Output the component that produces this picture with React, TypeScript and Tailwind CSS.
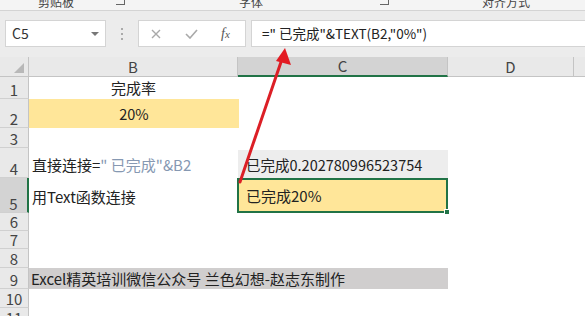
import React from "react";

const font = { fontFamily: '"Noto Sans CJK SC", "Noto Sans", sans-serif' };

function RowHead({ n, h, active }: { n: number; h: string; active?: boolean }) {
  return (
    <div
      className={`${h} w-[29px] shrink-0 flex items-end justify-center text-[15px] leading-[16px] text-[#444] border-b border-[#d0d0d0] ${
        active ? "bg-[#d3d3d3] border-r-2 border-r-[#217346]" : "bg-[#e9e9e9] border-r border-r-[#c4c4c4]"
      }`}
    >
      {n}
    </div>
  );
}

export default function App() {
  return (
    <div className="relative w-[585px] h-[316px] overflow-hidden bg-white" style={font}>
      {/* ribbon remnant */}
      <div className="h-[11px] bg-[#f4f4f4] border-b border-[#d4d4d4] flex items-start overflow-hidden text-[12px] leading-[12px] text-[#444]">
        <span className="ml-[38px] -mt-[4px]">剪贴板</span>
        <span className="ml-[42px] -mt-[2px] w-[9px] h-[7px] border-r border-b border-[#666]" />
        <span className="ml-[114px] -mt-[4px]">字体</span>
        <span className="ml-[117px] -mt-[2px] w-[9px] h-[7px] border-r border-b border-[#666]" />
        <span className="ml-[93px] -mt-[4px]">对齐方式</span>
      </div>

      {/* formula bar */}
      <div className="h-[46px] bg-[#ececec] flex items-start pt-[9px]">
        <div className="ml-[5px] w-[101px] h-[27px] bg-white border border-[#d4d4d4] flex items-center justify-between pl-[6px] pr-[6px]">
          <span className="text-[14px] text-[#333]">C5</span>
          <span className="w-0 h-0 border-l-[4px] border-r-[4px] border-t-[4px] border-l-transparent border-r-transparent border-t-[#777]" />
        </div>
        <div className="ml-[14px] w-[3px] h-[27px] flex flex-col items-center justify-center gap-[3px]">
          <span className="w-[2px] h-[2px] bg-[#aaa]" />
          <span className="w-[2px] h-[2px] bg-[#aaa]" />
          <span className="w-[2px] h-[2px] bg-[#aaa]" />
        </div>
        <div className="ml-[15px] w-[108px] h-[27px] bg-white border border-[#d4d4d4] flex items-center">
          <svg className="ml-[12px]" width="10" height="10" viewBox="0 0 10 10">
            <path d="M1 1 L9 9 M9 1 L1 9" stroke="#a9a9a9" strokeWidth="1.4" />
          </svg>
          <svg className="ml-[24px]" width="13" height="10" viewBox="0 0 13 10">
            <path d="M1 5 L5 9 L12 1" stroke="#a9a9a9" strokeWidth="1.6" fill="none" />
          </svg>
          <span
            className="ml-[23px] text-[14px] italic text-[#555]"
            style={{ fontFamily: '"Liberation Serif", serif' }}
          >
            f<span className="text-[11px]">x</span>
          </span>
        </div>
        <div className="ml-[5px] flex-1 h-[27px] bg-white border border-[#d4d4d4] border-r-0 flex items-center pl-[10px] text-[13.5px] text-[#222]">
          =" 已完成"&amp;TEXT(B2,"0%")
        </div>
      </div>

      {/* column headers */}
      <div className="h-[20px] flex text-[15px] leading-[18px] text-[#444]">
        <div className="w-[29px] bg-[#e9e9e9] border-r border-b border-[#c4c4c4] relative">
          <span
            className="absolute right-[4px] bottom-[3px] w-0 h-0"
            style={{ borderBottom: "10px solid #b8b8b8", borderLeft: "10px solid transparent" }}
          />
        </div>
        <div className="w-[209px] bg-[#e9e9e9] border-r border-b border-[#c4c4c4] flex justify-center items-end">B</div>
        <div className="w-[210px] bg-[#d3d3d3] border-r border-[#c4c4c4] border-b-2 border-b-[#217346] flex justify-center items-end">C</div>
        <div className="w-[126px] bg-[#e9e9e9] border-r border-b border-[#c4c4c4] flex justify-center items-end">D</div>
        <div className="flex-1 bg-[#e9e9e9] border-b border-[#c4c4c4]" />
      </div>

      {/* rows */}
      <div className="text-[15px] leading-[18px] text-[#222]">
        <div className="flex h-[22px]">
          <RowHead n={1} h="h-[22px]" />
          <div className="w-[209px] flex items-end justify-center pb-[2px]">完成率</div>
        </div>
        <div className="flex h-[29px]">
          <RowHead n={2} h="h-[29px]" />
          <div className="w-[210px] bg-[#ffe699] flex items-end justify-center pb-[5px] text-[14.5px]">20%</div>
        </div>
        <div className="flex h-[20px]">
          <RowHead n={3} h="h-[20px]" />
        </div>
        <div className="flex h-[30px]">
          <RowHead n={4} h="h-[30px]" />
          <div className="w-[209px] flex items-end pl-[3px] pb-[4px] whitespace-nowrap">
            直接连接=<span className="text-[#8698b2]">" 已完成"&amp;B2</span>
          </div>
          <div className="w-[210px] mt-[2px] bg-[#ededed] flex items-end pl-[8px] pb-[4px] whitespace-nowrap text-[14.5px]">
            已完成0.202780996523754
          </div>
        </div>
        <div className="flex h-[35px]">
          <RowHead n={5} h="h-[35px]" active />
          <div className="w-[208px] flex items-end pl-[3px] pb-[7px] whitespace-nowrap">用Text函数连接</div>
          <div className="relative w-[211px] bg-[#ffe699] border-2 border-[#217346] flex items-end pl-[7px] pb-[6px] whitespace-nowrap">
            已完成20%
            <span className="absolute -right-[4px] -bottom-[4px] w-[6px] h-[6px] bg-[#217346] border border-white" />
          </div>
        </div>
        <div className="flex h-[18px]">
          <RowHead n={6} h="h-[18px]" />
        </div>
        <div className="flex h-[18px]">
          <RowHead n={7} h="h-[18px]" />
        </div>
        <div className="flex h-[19px]">
          <RowHead n={8} h="h-[19px]" />
        </div>
        <div className="flex h-[21px]">
          <RowHead n={9} h="h-[21px]" />
          <div className="w-[419px] bg-[#d0cece] flex items-end pl-[2px] pb-[1px] whitespace-nowrap">
            Excel精英培训微信公众号 兰色幻想-赵志东制作
          </div>
        </div>
        <div className="flex h-[19px]">
          <RowHead n={10} h="h-[19px]" />
        </div>
        <div className="flex h-[19px]">
          <RowHead n={11} h="h-[19px]" />
        </div>
      </div>

      {/* red arrow overlay */}
      <svg className="absolute left-0 top-0 pointer-events-none" width="585" height="316" viewBox="0 0 585 316">
        <line x1="240" y1="182" x2="281" y2="62" stroke="#dc1f26" strokeWidth="3" strokeLinecap="round" />
        <polygon points="285,48 291,65 276,61" fill="#e31b23" />
      </svg>
    </div>
  );
}
